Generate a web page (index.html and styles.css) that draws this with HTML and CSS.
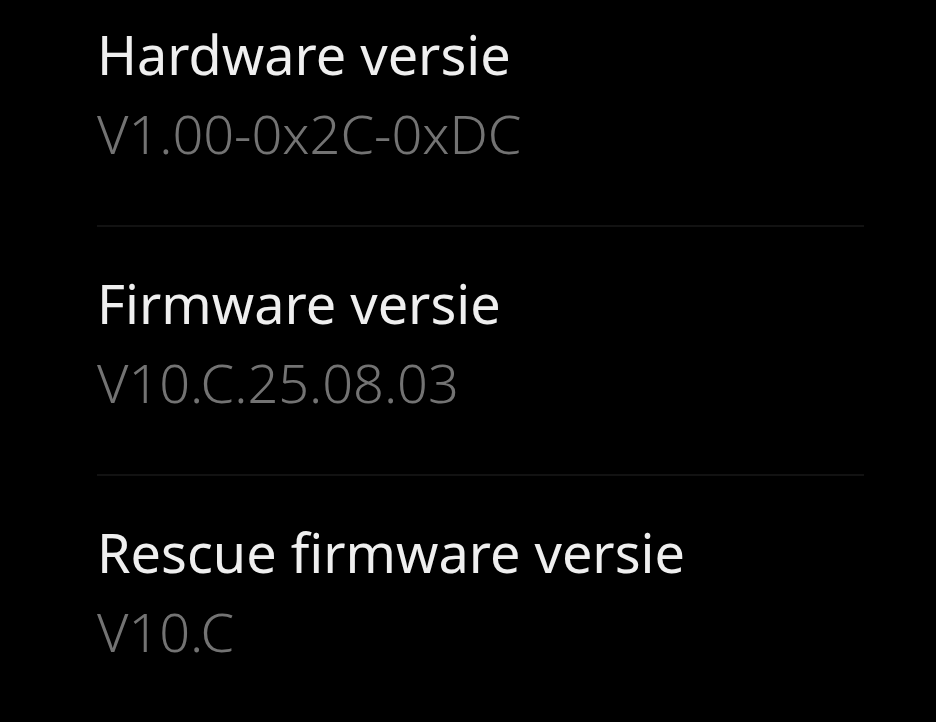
FILE: index.html
```html
<!DOCTYPE html>
<html lang="nl">
<head>
    <meta charset="UTF-8">
    <meta name="viewport" content="width=device-width, initial-scale=1.0">
    <title>Versie-informatie</title>
    <link rel="stylesheet" href="styles.css">
</head>
<body>
    <div class="info-list">
        <div class="info-item">
            <div class="info-title">Hardware versie</div>
            <div class="info-value">V1.00-0x2C-0xDC</div>
        </div>
        <div class="info-item">
            <div class="info-title">Firmware versie</div>
            <div class="info-value">V10.C.25.08.03</div>
        </div>
        <div class="info-item">
            <div class="info-title">Rescue firmware versie</div>
            <div class="info-value">V10.C</div>
        </div>
    </div>
</body>
</html>
```

FILE: styles.css
```css
body {
    margin: 0;
    background: #000;
    font-family: 'Noto Sans', 'Open Sans', sans-serif;
    height: 722px;
    overflow: hidden;
}
.info-list {
    margin-left: 97px;
    width: 767px;
}
.info-item {
    padding: 37px 0 52px;
    border-bottom: 2px solid #121212;
}
.info-item:first-child {
    padding-top: 15px;
}
.info-title,
.info-value {
    font-size: 54px;
    line-height: 79px;
    white-space: nowrap;
}
.info-title {
    color: #efefef;
}
.info-value {
    color: #737373;
    font-weight: 300;
}
```
